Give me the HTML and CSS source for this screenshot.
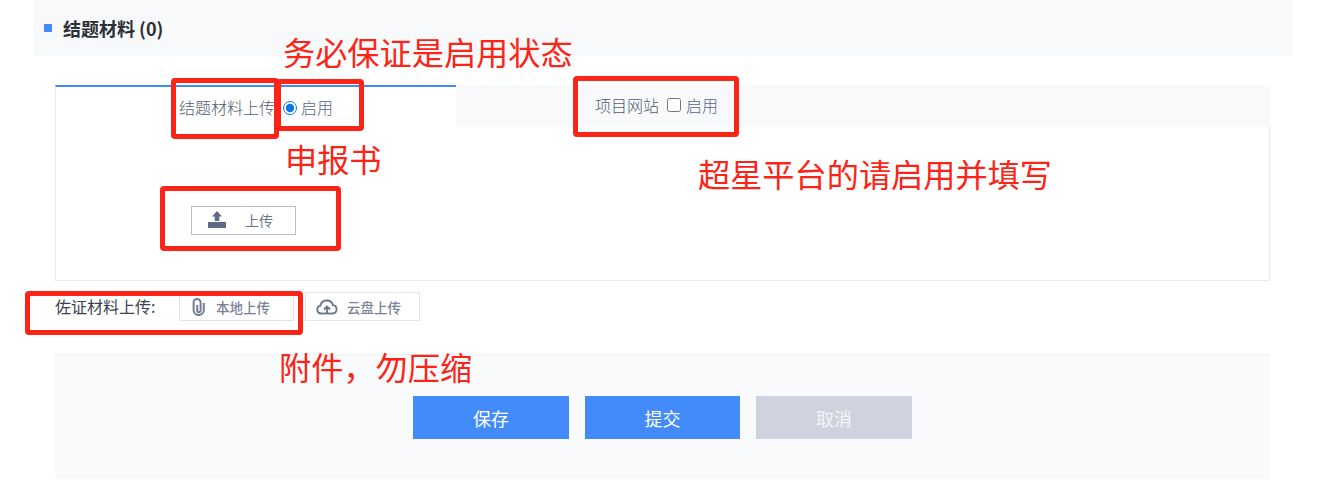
FILE: index.html
```html
<!DOCTYPE html>
<html lang="zh-CN">
<head>
    <meta charset="UTF-8">
    <title>结题材料</title>
    <link rel="stylesheet" href="styles.css">
</head>
<body>
    <div class="page">
        <div class="section-title">
            <span class="title-mark"></span>
            <h2>结题材料 (0)</h2>
        </div>

        <div class="content">
            <div class="tabs">
                <div class="tab active">
                    <span class="tab-name">结题材料上传</span>
                    <label class="enable"><input type="radio" checked>启用</label>
                </div>
                <div class="tab second">
                    <span class="tab-name">项目网站</span>
                    <label class="enable"><input type="checkbox">启用</label>
                </div>
            </div>
            <div class="tab-panel">
                <div class="upload-btn">
                    <svg width="20" height="18" viewBox="0 0 20 18"><path fill="#5f6b85" d="M10 0l5 5.500h-2.700V10H7.700V5.500H5zM1 11h18v6H1z"/></svg>
                    <span>上传</span>
                </div>
            </div>

            <div class="attach-row">
                <span class="attach-label">佐证材料上传:</span>
                <div class="attach-btn local">
                    <svg width="14" height="18" viewBox="0 0 14 18" fill="none" stroke="#727d94" stroke-width="2"><path d="M5.200 7v5.500a1.700 1.700 0 0 0 3.400 0V4.500a3.500 3.500 0 0 0-7 0V12a5 5 0 0 0 10.200 0V5"/></svg>
                    <span>本地上传</span>
                </div>
                <div class="attach-btn cloud">
                    <svg width="22" height="16" viewBox="0 0 22 16" fill="none" stroke="#68738c" stroke-width="1.8"><path d="M6 14.500H5a4 4 0 0 1-.6-7.900 6.500 6.500 0 0 1 12.600-.4 4.200 4.200 0 0 1 0 8.300h-1"/><path d="M11 14.500V8M8 10.500L11 7.500l3 3"/><path d="M6 14.500h10"/></svg>
                    <span>云盘上传</span>
                </div>
            </div>

            <div class="actions">
                <button class="btn">保存</button>
                <button class="btn narrow">提交</button>
                <button class="btn disabled">取消</button>
            </div>
        </div>

        <!-- red marks drawn over the screenshot -->
        <div class="mark box-a"></div>
        <div class="mark box-b"></div>
        <div class="mark box-c"></div>
        <div class="mark box-d"></div>
        <div class="mark box-e"></div>
        <div class="note note-a">务必保证是启用状态</div>
        <div class="note note-b">申报书</div>
        <div class="note note-c">超星平台的请启用并填写</div>
        <div class="note note-d">附件，勿压缩</div>
    </div>
</body>
</html>
```

FILE: styles.css
```css
* {
    box-sizing: border-box;
}
body {
    margin: 0;
    background: #fff;
    font-family: "Noto Sans CJK SC", "Liberation Sans", sans-serif;
    overflow: hidden;
}
.page {
    position: relative;
    width: 1335px;
    height: 501px;
    overflow: hidden;
}
.section-title {
    display: flex;
    align-items: center;
    width: 1260px;
    height: 56px;
    margin-left: 33px;
    padding-left: 11px;
    background: #f8f9fb;
}
.title-mark {
    width: 8px;
    height: 8px;
    margin-right: 11px;
    background: #4289fb;
}
.section-title h2 {
    margin: 0;
    font-size: 18px;
    font-weight: 700;
    line-height: 20px;
    color: #2b2f36;
}
.content {
    width: 1215px;
    margin: 29px 0 0 55px;
}
.tabs {
    display: flex;
    height: 42px;
}
.tab {
    display: flex;
    align-items: center;
    height: 42px;
    font-size: 16px;
    font-weight: 300;
    color: #525c70;
}
.tab.active {
    width: 401px;
    padding-left: 123px;
    border-top: 2px solid #4289fb;
    border-left: 1px solid #e8eaf0;
    background: #fff;
}
.tab.second {
    flex: 1;
    padding: 0 0 3px 139px;
    background: #f8f9fb;
}
.tab-name {
    margin-right: 8px;
}
.enable {
    display: flex;
    align-items: center;
    color: #56678a;
}
.enable input {
    width: 14px;
    height: 14px;
    margin: 1px 4px 0 0;
}
.tab.second .tab-name {
    margin-right: 8px;
}
.tab.second .enable input {
    margin-right: 5px;
}
.enable input[type="radio"] {
    accent-color: #0a75e6;
}
.tab-panel {
    height: 154px;
    padding: 79px 0 0 135px;
    border: 1px solid #e8eaf0;
    border-top: 0;
}
.upload-btn {
    display: flex;
    align-items: center;
    width: 105px;
    height: 29px;
    padding-left: 15px;
    border: 1px solid #bcbfc7;
    font-size: 14px;
    color: #6b7488;
}
.upload-btn svg {
    margin-bottom: 2px;
}
.upload-btn span {
    margin: 0 0 2px 18px;
}
.attach-row {
    display: flex;
    align-items: center;
    height: 29px;
    margin-top: 11px;
}
.attach-label {
    width: 124px;
    margin-bottom: 2px;
    font-size: 16px;
    color: #3a4150;
}
.attach-btn {
    display: flex;
    align-items: center;
    width: 115px;
    height: 29px;
    border: 1px solid #e3e5ea;
    font-size: 13.5px;
    font-weight: 500;
    color: #7a8294;
}
.attach-btn.local {
    padding-left: 12px;
}
.attach-btn.local span {
    margin-left: 10px;
}
.attach-btn.cloud {
    margin-left: 11px;
    padding-left: 10px;
}
.attach-btn.cloud span {
    margin-left: 9px;
}
.actions {
    display: flex;
    gap: 16px;
    height: 125px;
    margin-top: 33px;
    padding: 41px 0 0 358px;
    border-top: 1px solid #f0f1f4;
    background: #f9fafc;
}
.btn {
    width: 156px;
    height: 43px;
    padding: 0;
    border: 0;
    background: #438bfb;
    font-family: inherit;
    font-size: 18px;
    color: #fff;
}
.btn.narrow {
    width: 155px;
}
.btn.disabled {
    background: #ced3df;
    color: #f3f4f7;
}
/* annotations sit on top of the page */
.mark {
    position: absolute;
    border: 5px solid #fb2416;
    border-radius: 4px;
}
.box-a { left: 171px; top: 78px; width: 108px; height: 61px; }
.box-b { left: 276px; top: 79px; width: 88px; height: 52px; }
.box-c { left: 573px; top: 76px; width: 166px; height: 61px; }
.box-d { left: 160px; top: 186px; width: 181px; height: 65px; }
.box-e { left: 25px; top: 291px; width: 278px; height: 44px; }
.note {
    position: absolute;
    font-size: 32.2px;
    line-height: 40px;
    white-space: nowrap;
    color: #fb2416;
}
.note-a { left: 283px; top: 31px; }
.note-b { left: 285px; top: 138px; }
.note-c { left: 698px; top: 153px; }
.note-d { left: 279px; top: 346px; }
```
